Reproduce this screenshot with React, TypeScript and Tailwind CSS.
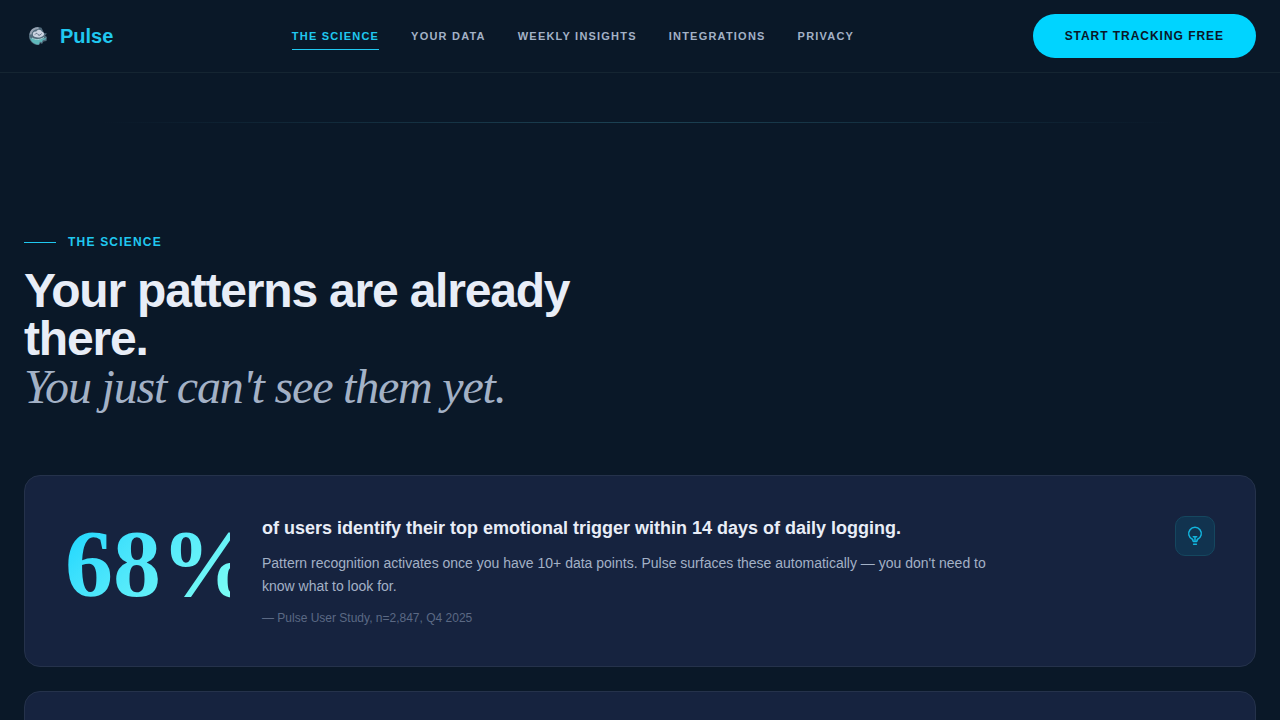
import { FC } from "react";

const NAV_LINKS = [
  { label: "The Science", href: "#science" },
  { label: "Your Data", href: "#data" },
  { label: "Weekly Insights", href: "#insights" },
  { label: "Integrations", href: "#integrations" },
  { label: "Privacy", href: "#privacy" },
];

const Logo: FC = () => (
  <svg width="28" height="28" viewBox="0 0 28 28" fill="none" aria-hidden="true">
    <path
      d="M17.500 5.800A9 9 0 1 0 15 23l1.500-2 1.500 1 1.500-2.500 3-.5.500-4-2-1.500 2-2-3-.5z"
      fill="#50697a"
    />
    <path d="M6.500 12.500C7 8.500 10 6.300 14.500 6" stroke="#98a3b3" strokeWidth="2" />
    <path
      d="M9 13.500c-.8-3 1-4.500 3.200-4 1.500-2.500 5-2 5.800.3 2.500.5 2.800 3.700.5 4.400-2.500 1.800-7.500 1.800-9.500-.7z"
      fill="#ccd3e0"
    />
    <path d="M11 12.500c1-1.500 2-1.500 3 0s2.500.5 3.500-1" stroke="#56657a" strokeWidth="1" />
    <path
      d="M6 15.500c1 4.500 4.500 7 8.800 7l1.200-3 1.500 1 1.500-2.500 2.500-.5.500-2c-5 3-11.500 3-16 0z"
      fill="#5fb8bb"
    />
    <path d="M8 16c3.500 2.200 8 2 12-.5" stroke="#a9dcdf" strokeWidth="1" />
  </svg>
);

const BulbIcon: FC = () => (
  <svg
    width="20"
    height="20"
    viewBox="0 0 20 20"
    fill="none"
    stroke="#12b5de"
    strokeWidth="1.500"
    strokeLinecap="round"
    strokeLinejoin="round"
    aria-hidden="true"
  >
    <path d="M7.500 13.400a6.300 6.300 0 1 1 5 0" />
    <path d="M8.300 10.800h3.400M10 10.800v3.400M7.500 13.400l.8 2h3.400l.8-2M8.600 18.300h2.800" />
  </svg>
);

const Header: FC = () => {
  return (
    <header className="border-b border-[#152532] px-6">
      <div className="flex h-[72px] items-center justify-between">
        <a href="#home" className="flex items-center gap-2 text-xl font-bold text-[#20c8f0]">
          <Logo />
          Pulse
        </a>
        <nav className="flex gap-8">
          {NAV_LINKS.map((link, i) => (
            <a
              key={link.href}
              href={link.href}
              className={
                i === 0
                  ? "border-b border-[#20c8f0] pt-[5px] pb-1 text-[11px] leading-[18px] font-bold tracking-[0.11em] text-[#20c8f0] uppercase"
                  : "border-b border-transparent pt-[5px] pb-1 text-[11px] leading-[18px] font-bold tracking-[0.11em] text-[#a3b1c6] uppercase"
              }
            >
              {link.label}
            </a>
          ))}
        </nav>
        <button
          type="button"
          className="h-11 rounded-full bg-[#00d4ff] px-8 text-xs font-bold tracking-[0.08em] text-[#0a1628] uppercase"
        >
          Start Tracking Free
        </button>
      </div>
    </header>
  );
};

const App: FC = () => {
  return (
    <div className="h-screen overflow-hidden bg-[#0a1828] font-['Liberation_Sans',Arial,sans-serif] text-[#e8edf7]">
      <Header />
      <main>
        <div className="mx-[8%] mt-[49px] h-px bg-linear-to-r from-transparent via-[#1c4254] to-transparent" />
        <section id="science" className="px-6 pt-28">
          <div className="flex items-center gap-3">
            <span className="h-px w-8 bg-[#20c8f0]" />
            <span className="text-xs leading-[15px] font-bold tracking-widest text-[#20c8f0] uppercase">
              The Science
            </span>
          </div>
          <h2 className="mt-[17px] max-w-[600px] text-5xl leading-[48px] font-bold tracking-tight">
            Your patterns are already there.
            <em className="block font-['Liberation_Serif','Times_New_Roman',serif] font-normal text-[#a3b1c6]">
              You just can't see them yet.
            </em>
          </h2>

          <div className="mt-16 flex flex-col gap-6">
            <article className="flex items-start gap-8 rounded-2xl border border-[#25324b] bg-[#16233f] p-10">
              <div className="w-[165px] shrink-0 bg-linear-135 from-[#00d4ff] to-[#7ffff4] bg-clip-text font-['Liberation_Serif','Times_New_Roman',serif] text-8xl leading-[96px] font-bold text-transparent">
                68%
              </div>
              <div className="flex-1">
                <h3 className="text-lg leading-6 font-bold">
                  of users identify their top emotional trigger within 14 days of daily logging.
                </h3>
                <p className="mt-3 max-w-[740px] text-sm leading-[23px] text-[#a3b1c6]">
                  Pattern recognition activates once you have 10+ data points. Pulse surfaces these
                  automatically — you don't need to know what to look for.
                </p>
                <p className="mt-3 text-xs text-[#5b6984]">
                  — Pulse User Study, n=2,847, Q4 2025
                </p>
              </div>
              <div className="flex size-10 shrink-0 items-center justify-center rounded-[10px] border border-[#15475f] bg-[#11334f]">
                <BulbIcon />
              </div>
            </article>
            <article className="h-48 rounded-2xl border border-[#25324b] bg-[#16233f]" />
          </div>
        </section>
      </main>
    </div>
  );
};

export default App;
